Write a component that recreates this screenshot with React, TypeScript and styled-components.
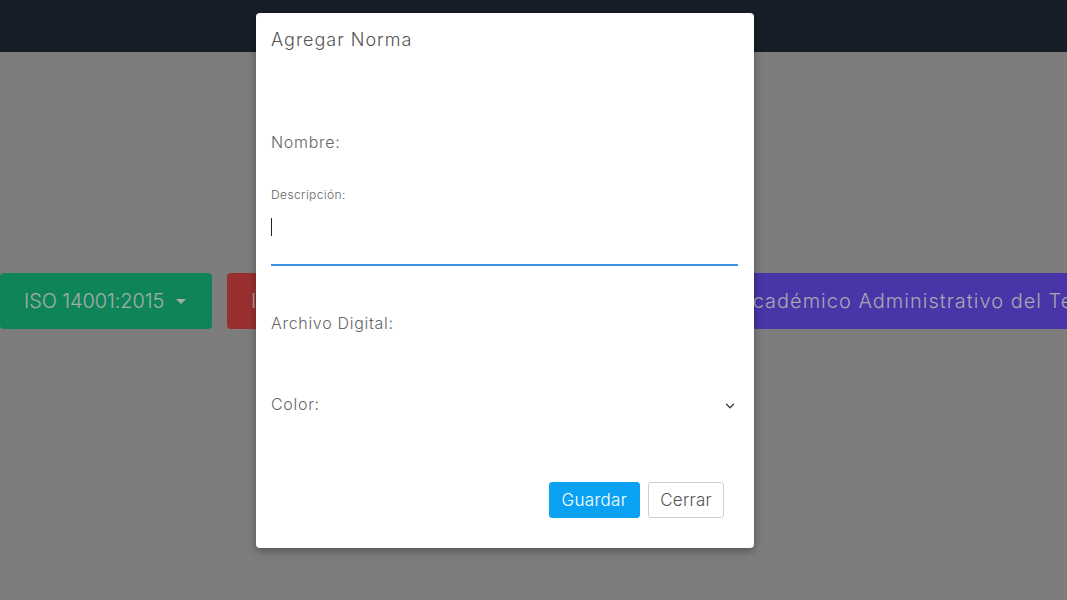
import React from "react";
import styled, { createGlobalStyle } from "styled-components";
import { ChevronDown } from "lucide-react";

const GlobalStyle = createGlobalStyle`
  html, body { margin: 0; padding: 0; }
  body {
    font-family: Inter, "Open Sans", "Liberation Sans", sans-serif;
    background: #b3b3b3;
    width: 1067px;
    height: 600px;
    overflow: hidden;
  }
  * { box-sizing: border-box; }
`;

const Page = styled.div`
  width: 1067px;
  height: 600px;
  background: #b3b3b3;
  overflow: hidden;
  position: relative;
`;

const Navbar = styled.header`
  height: 52px;
  background: #222b39;
`;

const TabRow = styled.nav`
  display: flex;
  gap: 15px;
  margin-top: 221px;
  white-space: nowrap;
`;

const NormButton = styled.button<{ $bg: string; $w?: number; $ls?: number }>`
  flex: none;
  display: flex;
  align-items: center;
  gap: 12px;
  height: 56px;
  padding: 0 24px;
  ${(p) => (p.$w ? `width: ${p.$w}px;` : "")}
  border: none;
  border-radius: 4px;
  background: ${(p) => p.$bg};
  color: rgba(255, 255, 255, 0.92);
  font-family: inherit;
  font-size: 20px;
  font-weight: 300;
  letter-spacing: ${(p) => p.$ls ?? -0.1}px;
`;

const Caret = styled.span`
  width: 0;
  height: 0;
  border-left: 5px solid transparent;
  border-right: 5px solid transparent;
  border-top: 5px solid currentColor;
`;

const Overlay = styled.div`
  position: absolute;
  inset: 0;
  background: rgba(0, 0, 0, 0.3);
  display: flex;
  justify-content: flex-start;
  align-items: flex-start;
  padding: 13px 0 0 256px;
`;

const Modal = styled.div`
  width: 498px;
  height: 535px;
  background: #ffffff;
  border-radius: 4px;
  box-shadow: 0 3px 9px rgba(0, 0, 0, 0.35);
  display: flex;
  flex-direction: column;
  padding: 0 16px 0 15px;
  color: #666666;
  font-weight: 300;
`;

const Title = styled.h4`
  margin: 17px 0 0;
  font-size: 18px;
  line-height: 20px;
  font-weight: 300;
  color: #555555;
  letter-spacing: 1px;
`;

const Label = styled.label<{ $top: number; $small?: boolean }>`
  display: block;
  margin-top: ${(p) => p.$top}px;
  font-size: ${(p) => (p.$small ? 12 : 16)}px;
  line-height: ${(p) => (p.$small ? 16 : 20)}px;
  letter-spacing: ${(p) => (p.$small ? 0.4 : 0.7)}px;
  color: #666666;
`;

const TextArea = styled.div`
  height: 63px;
  border-bottom: 2px solid #3c8ee2;
  padding-top: 15px;
`;

const Cursor = styled.span`
  display: block;
  width: 1px;
  height: 18px;
  background: #222222;
`;

const SelectRow = styled.div`
  margin-top: 61px;
  display: flex;
  align-items: center;
  justify-content: space-between;
  padding-right: 1px;
  font-size: 16px;
  line-height: 20px;
  letter-spacing: 0.7px;
  color: #666666;
  svg { color: #444; margin-top: 4px; }
`;

const Footer = styled.div`
  margin-top: 68px;
  display: flex;
  justify-content: flex-end;
  gap: 8px;
  padding-right: 14px;
`;

const ActionButton = styled.button<{ $primary?: boolean }>`
  height: 36px;
  padding: 0 ${(p) => (p.$primary ? 12 : 11)}px;
  border-radius: 3px;
  font-family: inherit;
  font-size: 17px;
  font-weight: 300;
  letter-spacing: 0.3px;
  border: 1px solid ${(p) => (p.$primary ? "#0ba2f3" : "#cfcfcf")};
  background: ${(p) => (p.$primary ? "#0ba2f3" : "#ffffff")};
  color: ${(p) => (p.$primary ? "#ffffff" : "#555555")};
`;

export default function App() {
  return (
    <Page>
      <GlobalStyle />
      <Navbar />
      <TabRow>
        <NormButton $bg="#17bd80" $w={212}>
          ISO 14001:2015 <Caret />
        </NormButton>
        <NormButton $bg="#dc4545" $w={382}>
          ISO 9001:2015 <Caret />
        </NormButton>
        <NormButton $bg="#674df0" $ls={1.0}>
          Consejo Académico Administrativo del Tecnológico
        </NormButton>
      </TabRow>
      <Overlay>
        <Modal>
          <Title>Agregar Norma</Title>
          <Label $top={82}>Nombre:</Label>
          <Label $top={35} $small>
            Descripción:
          </Label>
          <TextArea>
            <Cursor />
          </TextArea>
          <Label $top={47}>Archivo Digital:</Label>
          <SelectRow>
            <span>Color:</span>
            <ChevronDown size={14} strokeWidth={2.5} />
          </SelectRow>
          <Footer>
            <ActionButton $primary>Guardar</ActionButton>
            <ActionButton>Cerrar</ActionButton>
          </Footer>
        </Modal>
      </Overlay>
    </Page>
  );
}
